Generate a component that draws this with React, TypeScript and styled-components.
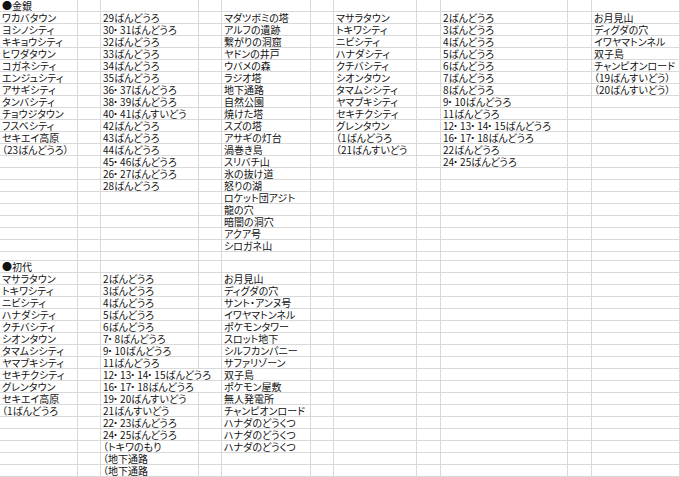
import React from 'react';
import styled, { createGlobalStyle } from 'styled-components';

const GlobalStyle = createGlobalStyle`
  html, body {
    margin: 0;
    padding: 0;
    background: #ffffff;
  }
`

const ROW_COUNT = 40;
const COL_WIDTHS = [78, 23, 98, 23, 89, 23, 83, 24, 127, 24];

const Sheet = styled.div`
  display: grid;
  grid-template-columns: ${COL_WIDTHS.map((w) => `${w}px`).join(' ')} 1fr;
  grid-template-rows: repeat(${ROW_COUNT}, 1fr);
  width: 680px;
  height: 477px;
  overflow: hidden;
  font-family: "Noto Sans CJK JP", "Noto Sans", sans-serif;
  font-size: 10px;
  font-feature-settings: "palt";
  color: #111;
`

const Cell = styled.div<{ span: number }>`
  grid-column: span ${(props) => props.span};
  box-sizing: border-box;
  border-right: 1px solid #d9d9d9;
  border-bottom: 1px solid #d9d9d9;
  display: flex;
  align-items: flex-end;
  padding: 0 0 0 2px;
  min-width: 0;
  white-space: nowrap;
  line-height: 11px;
`

// the sheet's middle dot sits close to the number before it
const Dot = styled.span`
  margin: 0 2px 0 -1px;
`

type Item = string | [string, number];

type Block = {
  col: number;
  start: number;
  items: Item[];
}

const BLOCKS: Block[] = [
  { col: 0, start: 0, items: ['●金銀'] },
  {
    col: 0,
    start: 1,
    items: [
      'ワカバタウン', 'ヨシノシティ', 'キキョウシティ', 'ヒワダタウン', 'コガネシティ',
      'エンジュシティ', 'アサギシティ', 'タンバシティ', 'チョウジタウン', 'フスベシティ',
      'セキエイ高原', '（23ばんどうろ）',
    ],
  },
  {
    col: 2,
    start: 1,
    items: [
      '29ばんどうろ', '30・31ばんどうろ', '32ばんどうろ', '33ばんどうろ', '34ばんどうろ',
      '35ばんどうろ', '36・37ばんどうろ', '38・39ばんどうろ', '40・41ばんすいどう', '42ばんどうろ',
      '43ばんどうろ', '44ばんどうろ', '45・46ばんどうろ', '26・27ばんどうろ', '28ばんどうろ',
    ],
  },
  {
    col: 4,
    start: 1,
    items: [
      'マダツボミの塔', 'アルフの遺跡', '繋がりの洞窟', 'ヤドンの井戸', 'ウバメの森',
      'ラジオ塔', '地下通路', '自然公園', '焼けた塔', 'スズの塔',
      'アサギの灯台', '渦巻き島', 'スリバチ山', '氷の抜け道', '怒りの湖',
      'ロケット団アジト', '龍の穴', '暗闇の洞穴', 'アクア号', 'シロガネ山',
    ],
  },
  {
    col: 6,
    start: 1,
    items: [
      'マサラタウン', 'トキワシティ', 'ニビシティ', 'ハナダシティ', 'クチバシティ',
      'シオンタウン', 'タマムシシティ', 'ヤマブキシティ', 'セキチクシティ', 'グレンタウン',
      '（1ばんどうろ', '（21ばんすいどう',
    ],
  },
  {
    col: 8,
    start: 1,
    items: [
      '2ばんどうろ', '3ばんどうろ', '4ばんどうろ', '5ばんどうろ', '6ばんどうろ',
      '7ばんどうろ', '8ばんどうろ', '9・10ばんどうろ', '11ばんどうろ', '12・13・14・15ばんどうろ',
      '16・17・18ばんどうろ', '22ばんどうろ', '24・25ばんどうろ',
    ],
  },
  {
    col: 10,
    start: 1,
    items: [
      'お月見山', 'ディグダの穴', 'イワヤマトンネル', '双子島', 'チャンピオンロード',
      '（19ばんすいどう）', '（20ばんすいどう）',
    ],
  },
  { col: 0, start: 22, items: ['●初代'] },
  {
    col: 0,
    start: 23,
    items: [
      'マサラタウン', 'トキワシティ', 'ニビシティ', 'ハナダシティ', 'クチバシティ',
      'シオンタウン', 'タマムシシティ', 'ヤマブキシティ', 'セキチクシティ', 'グレンタウン',
      'セキエイ高原', '（1ばんどうろ',
    ],
  },
  {
    col: 2,
    start: 23,
    items: [
      '2ばんどうろ', '3ばんどうろ', '4ばんどうろ', '5ばんどうろ', '6ばんどうろ',
      '7・8ばんどうろ', '9・10ばんどうろ', '11ばんどうろ', ['12・13・14・15ばんどうろ', 2], ['16・17・18ばんどうろ', 2],
      '19・20ばんすいどう', '21ばんすいどう', '22・23ばんどうろ', '24・25ばんどうろ', '（トキワのもり',
      '（地下通路', '（地下通路',
    ],
  },
  {
    col: 4,
    start: 23,
    items: [
      'お月見山', 'ディグダの穴', 'サント・アンヌ号', 'イワヤマトンネル', 'ポケモンタワー',
      'スロット地下', 'シルフカンパニー', 'サファリゾーン', '双子島', 'ポケモン屋敷',
      '無人発電所', 'チャンピオンロード', 'ハナダのどうくつ', 'ハナダのどうくつ', 'ハナダのどうくつ',
    ],
  },
]

type Entry = { text: string; span: number };

const buildRows = () => {
  const colCount = COL_WIDTHS.length + 1;
  const rows: (Entry | null)[][] = Array.from({ length: ROW_COUNT }, () =>
    Array.from({ length: colCount }, () => null)
  );
  BLOCKS.forEach((block) => {
    block.items.forEach((item, i) => {
      const [text, span] = typeof item === 'string' ? [item, 1] : item;
      rows[block.start + i][block.col] = { text, span };
    });
  });
  return rows;
}

// only number lists get the shifted dot; サント・アンヌ号 keeps the plain one
const renderText = (text: string) => {
  if (!/\d・\d/.test(text)) return text;
  const parts = text.split('・');
  return parts.map((part, i) => <React.Fragment key={i}>
    {part}
    {i < parts.length - 1 && <Dot>・</Dot>}
  </React.Fragment>);
}

export default function App() {
  const rows = buildRows();

  return <>
    <GlobalStyle />
    <Sheet>
      {
        rows.map((row, r) => {
          const cells: React.ReactNode[] = [];
          let c = 0;
          while (c < row.length) {
            const entry = row[c];
            const span = entry ? entry.span : 1;
            cells.push(<Cell key={`${r}-${c}`} span={span}>{entry ? renderText(entry.text) : ''}</Cell>);
            c += span;
          }
          return cells;
        })
      }
    </Sheet>
  </>
}
